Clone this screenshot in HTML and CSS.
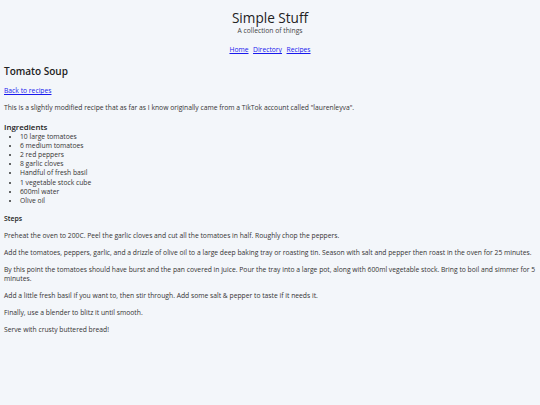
FILE: index.html
```html
<!DOCTYPE html>
<html lang="en">
<head>
<meta charset="utf-8">
<title>Tomato Soup - Simple Stuff</title>
<link rel="stylesheet" href="styles.css">
</head>
<body>
<header class="site-header">
  <h1 class="site-title">Simple Stuff</h1>
  <p class="site-tagline">A collection of things</p>
  <nav class="site-nav">
    <a href="#">Home</a>
    <a href="#">Directory</a>
    <a href="#">Recipes</a>
  </nav>
</header>
<main class="content">
  <h2 class="page-title">Tomato Soup</h2>
  <p class="back"><a href="#">Back to recipes</a></p>
  <p>This is a slightly modified recipe that as far as I know originally came from a TikTok account called "laurenleyva".</p>
  <h3 class="section-title">Ingredients</h3>
  <ul class="ingredients">
    <li>10 large tomatoes</li>
    <li>6 medium tomatoes</li>
    <li>2 red peppers</li>
    <li>8 garlic cloves</li>
    <li>Handful of fresh basil</li>
    <li>1 vegetable stock cube</li>
    <li>600ml water</li>
    <li>Olive oil</li>
  </ul>
  <h4 class="subsection-title">Steps</h4>
  <p>Preheat the oven to 200C. Peel the garlic cloves and cut all the tomatoes in half. Roughly chop the peppers.</p>
  <p>Add the tomatoes, peppers, garlic, and a drizzle of olive oil to a large deep baking tray or roasting tin. Season with salt and pepper then roast in the oven for 25 minutes.</p>
  <p>By this point the tomatoes should have burst and the pan covered in juice. Pour the tray into a large pot, along with 600ml vegetable stock. Bring to boil and simmer for 5 minutes.</p>
  <p>Add a little fresh basil if you want to, then stir through. Add some salt &amp; pepper to taste if it needs it.</p>
  <p>Finally, use a blender to blitz it until smooth.</p>
  <p>Serve with crusty buttered bread!</p>
</main>
</body>
</html>
```

FILE: styles.css
```css
html {
  background: #f3f6fa;
}
body {
  margin: 0;
  padding: 0 4px;
  font-family: "Open Sans", "Noto Sans", sans-serif;
  font-size: 6.75px;
  line-height: 9.2px;
  color: #333;
  background: #f3f6fa;
}
a {
  color: #1a1aee;
  text-decoration: underline;
}
.site-header {
  text-align: center;
  padding-top: 10px;
}
.site-title {
  margin: 0;
  font-size: 13.6px;
  font-weight: 400;
  line-height: 16px;
  color: #222;
}
.site-tagline {
  margin: 0;
  color: #444;
}
.site-nav {
  margin-top: 10px;
  display: flex;
  justify-content: center;
  gap: 4.5px;
}
.content p {
  margin: 7.8px 0;
}
.page-title {
  margin: 11px 0 0;
  font-size: 10px;
  font-weight: 600;
  line-height: 13px;
  color: #222;
}
.content .back {
  margin-top: 8px;
}
.section-title {
  margin: 9px 0 0;
  font-size: 7.9px;
  font-weight: 600;
  line-height: 10px;
  color: #222;
}
.ingredients {
  margin: 0;
  padding-left: 16px;
}
.subsection-title {
  margin: 8.8px 0 0;
  font-size: 6.9px;
  font-weight: 600;
  color: #222;
}
```
